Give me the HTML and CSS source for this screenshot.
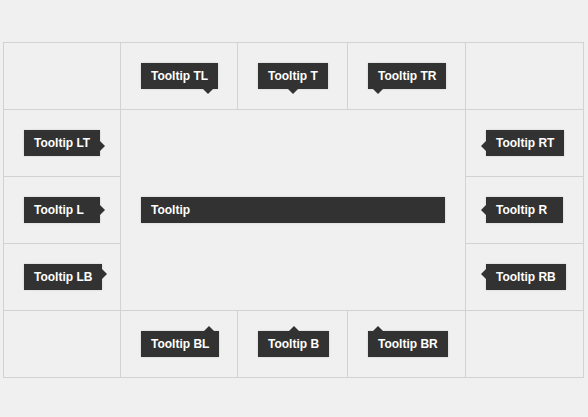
FILE: index.html
```html
<!DOCTYPE html>
<html>
<head>
<meta charset="utf-8">
<link rel="stylesheet" href="styles.css">
</head>
<body>
<div class="board">
  <div class="cell"></div>
  <div class="cell"><span class="tip tip-tl">Tooltip TL</span></div>
  <div class="cell"><span class="tip tip-t">Tooltip T</span></div>
  <div class="cell"><span class="tip tip-tr">Tooltip TR</span></div>
  <div class="cell"></div>

  <div class="cell"><span class="tip tip-lt">Tooltip LT</span></div>
  <div class="cell center"><span class="tip tip-wide">Tooltip</span></div>
  <div class="cell"><span class="tip tip-rt">Tooltip RT</span></div>

  <div class="cell"><span class="tip tip-l">Tooltip L</span></div>
  <div class="cell"><span class="tip tip-r">Tooltip R</span></div>

  <div class="cell"><span class="tip tip-lb">Tooltip LB</span></div>
  <div class="cell"><span class="tip tip-rb">Tooltip RB</span></div>

  <div class="cell"></div>
  <div class="cell"><span class="tip tip-bl">Tooltip BL</span></div>
  <div class="cell"><span class="tip tip-b">Tooltip B</span></div>
  <div class="cell"><span class="tip tip-br">Tooltip BR</span></div>
  <div class="cell"></div>
</div>
</body>
</html>
```

FILE: styles.css
```css
html, body {
  margin: 0;
  padding: 0;
  background: #f0f0f0;
}

body {
  font-family: "Liberation Sans", Arial, sans-serif;
}

.board {
  display: grid;
  grid-template-columns: 117px 117px 110px 118px 118px;
  grid-template-rows: 67px 67px 67px 67px 67px;
  width: 580px;
  margin: 42px 0 0 3px;
  border-top: 1px solid #d2d2d2;
  border-left: 1px solid #d2d2d2;
}

.cell {
  border-right: 1px solid #d2d2d2;
  border-bottom: 1px solid #d2d2d2;
  display: flex;
  align-items: center;
  padding: 0 20px;
}

.center {
  grid-column: 2 / 5;
  grid-row: 2 / 5;
}

.tip {
  position: relative;
  display: block;
  flex: 1;
  height: 26px;
  line-height: 26px;
  padding: 0 10px;
  background: #323232;
  color: #fff;
  font-size: 12px;
  font-weight: bold;
  white-space: nowrap;
  box-shadow: 0 0 2px rgba(0, 0, 0, 0.15);
}

.tip::after {
  content: "";
  position: absolute;
  width: 0;
  height: 0;
  border: 5px solid transparent;
}

/* arrows pointing down (tooltip above) */
.tip-tl::after, .tip-t::after, .tip-tr::after {
  top: 100%;
  border-top-color: #323232;
  border-bottom-width: 0;
}
.tip-tl::after { right: 5px; }
.tip-t::after { left: 50%; margin-left: -5px; }
.tip-tr::after { left: 5px; }

/* arrows pointing up (tooltip below) */
.tip-bl::after, .tip-b::after, .tip-br::after {
  bottom: 100%;
  border-bottom-color: #323232;
  border-top-width: 0;
}
.tip-bl::after { right: 5px; }
.tip-b::after { left: 50%; margin-left: -5px; }
.tip-br::after { left: 5px; }

/* arrows pointing right (tooltip on the left) */
.tip-lt::after, .tip-l::after, .tip-lb::after {
  left: 100%;
  border-left-color: #323232;
  border-right-width: 0;
}
.tip-lt::after { bottom: 5px; }
.tip-l::after { top: 50%; margin-top: -5px; }
.tip-lb::after { top: 5px; }

/* arrows pointing left (tooltip on the right) */
.tip-rt::after, .tip-r::after, .tip-rb::after {
  right: 100%;
  border-right-color: #323232;
  border-left-width: 0;
}
.tip-rt::after { bottom: 5px; }
.tip-r::after { top: 50%; margin-top: -5px; }
.tip-rb::after { top: 5px; }

.tip-wide::after {
  display: none;
}
```
